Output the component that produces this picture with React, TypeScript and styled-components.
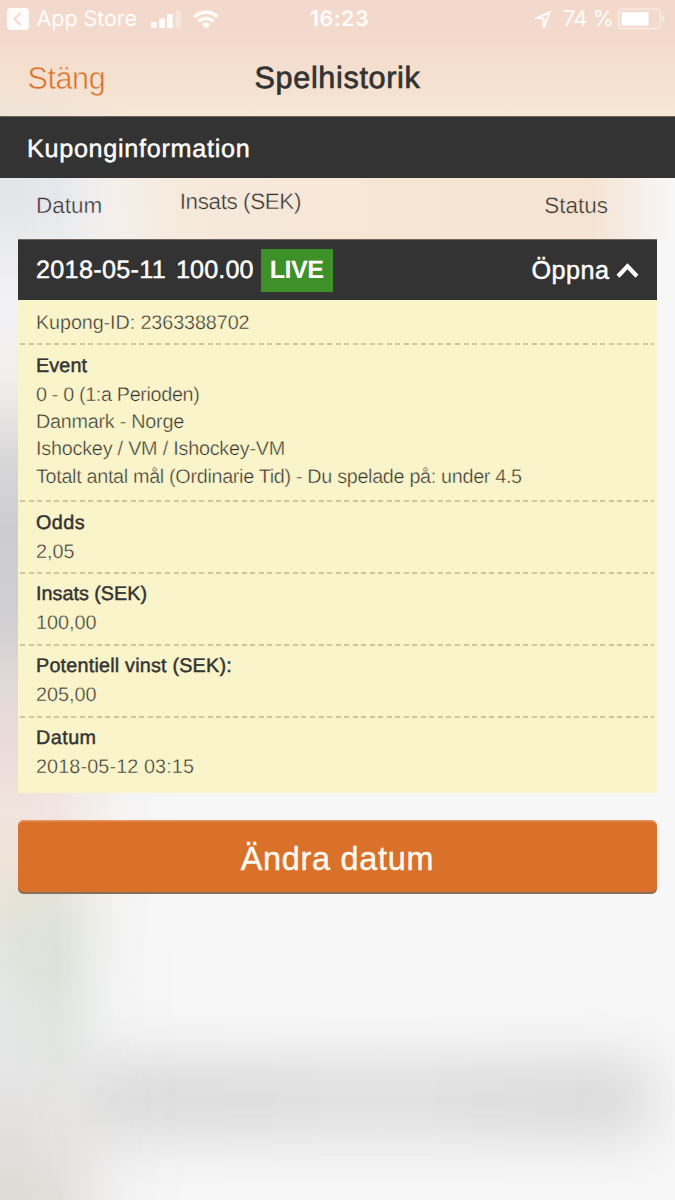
import React from "react";
import styled, { createGlobalStyle, css } from "styled-components";

const paper = "#faf4ca";
const ink = "#333333";

const GlobalStyle = createGlobalStyle`
  * { box-sizing: border-box; }
  html, body { margin: 0; padding: 0; background: #f7f7f8; }
  body {
    font-family: "Liberation Sans", Arial, sans-serif;
    color: ${ink};
    text-rendering: geometricPrecision;
    -webkit-font-smoothing: antialiased;
  }
`;

type Tracking = { $track?: number };
const tracked = css<Tracking>`
  letter-spacing: ${(p) => p.$track ?? 0}px;
  white-space: nowrap;
`;
/* Liberation Sans has no light or medium cut: a stroke thins or thickens it. */
const light = (around: string) => css`-webkit-text-stroke: 0.4px ${around};`;
const medium = css`-webkit-text-stroke: 0.45px currentColor;`;

const Screen = styled.main`
  position: relative;
  isolation: isolate;
  width: 675px;
  height: 1200px;
  overflow: hidden;
  display: flex;
  flex-direction: column;
  background: #f7f7f8;
  &::before {
    content: "";
    position: absolute;
    z-index: -1;
    inset: 0 auto 0 0;
    width: 190px;
    background:
      radial-gradient(ellipse 65px 150px at 62px 965px, rgba(212,218,206,.7), rgba(212,218,206,.3) 55%, transparent),
      linear-gradient(#e4e5e9 200px, #f2f2f5 300px, #f2eeec 380px, #d8d7d8 460px, #cdcdd0 530px,
        #cfced0 610px, #e2d9d9 690px, #ecdcd9 750px, #f1e3de 810px, #efe3d8 860px, #e5e4d9 910px,
        #e3e6e1 960px, #e6e8e8 1010px, #e5e5e6 1070px, #e3e1df 1120px, #dedad6 1200px);
    mask-image: linear-gradient(90deg, #000 20px, rgba(0,0,0,.85) 60px, rgba(0,0,0,.5) 90px, rgba(0,0,0,.2) 118px, rgba(0,0,0,.06) 145px, transparent);
  }
  &::after {
    content: "";
    position: absolute;
    z-index: -2;
    top: 1060px;
    left: 60px;
    width: 590px;
    height: 78px;
    background: linear-gradient(90deg, #dadada 25%, #dedede 55%, #d8d8d8 90%);
    filter: blur(28px);
  }
`;

const Header = styled.header`
  height: 116px;
  background:
    radial-gradient(ellipse 130px 36px at 0 120px, rgba(234,226,220,.8), transparent),
    linear-gradient(#f3d8cc, #f4dacd 40px, #f5e0cf 75px, #f6e7d6 116px);
`;

const StatusBar = styled.div`
  display: grid;
  grid-template-columns: 1fr auto 1fr;
  align-items: center;
  height: 38px;
  padding: 0 10px 0 7px;
  color: #fffdfb;
  font: 400 21.5px/38px Inter, sans-serif;
`;
const StatusGroup = styled.div<{ $end?: boolean }>`
  display: flex;
  align-items: center;
  justify-content: ${(p) => (p.$end ? "flex-end" : "flex-start")};
`;
const StatusText = styled.span<Tracking & { $left?: number }>`
  margin-left: ${(p) => p.$left ?? 0}px;
  ${tracked}
`;
const Clock = styled(StatusText)`
  padding-left: 7px;
  font-weight: 600;
`;
const Glyph = styled.svg<{ $left?: number }>`
  display: block;
  flex: none;
  margin-left: ${(p) => p.$left ?? 0}px;
`;

const NavBar = styled.nav`
  display: grid;
  grid-template-columns: 1fr auto 1fr;
  align-items: center;
  height: 80px;
  padding: 0 27.5px;
`;
const CloseButton = styled.button<Tracking>`
  justify-self: start;
  padding: 0;
  border: 0;
  background: none;
  color: #d9712b;
  font: 400 30.6px/40px "Liberation Sans", sans-serif;
  ${tracked}
  -webkit-text-stroke: 0.6px #f4dece;
`;
const Title = styled.h1<Tracking>`
  margin: 0;
  font: 400 30.6px/40px "Liberation Sans", sans-serif;
  ${tracked}
  -webkit-text-stroke: 0.7px currentColor;
`;

const SectionBar = styled.h2<Tracking>`
  height: 62px;
  margin: 0;
  padding: 2px 27px 0;
  border-top: 1px solid #6d655f;
  background: #333;
  color: #fff;
  font: 400 25.2px/60px "Liberation Sans", sans-serif;
  ${tracked}
  ${medium}
`;

const ColumnHeads = styled.div`
  display: flex;
  align-items: flex-start;
  height: 61px;
  padding: 0 67px 0 36px;
  background:
    linear-gradient(90deg, transparent 70px, rgba(246,233,220,.95) 175px, #f6e6d4 400px, #f5e4d2 590px,
      rgba(246,234,224,.8) 630px, transparent 672px);
`;
const ColumnHead = styled.span<Tracking & { $top: number; $around: string }>`
  padding-top: ${(p) => p.$top}px;
  font-size: 22.5px;
  line-height: 28px;
  ${tracked}
  ${(p) => light(p.$around)}
  &:nth-child(2) { margin-left: 77.5px; }
  &:last-child { margin-left: auto; }
`;

const Coupon = styled.section`
  margin: 0 18px;
`;
const CouponBar = styled.div`
  display: flex;
  align-items: center;
  height: 61px;
  padding: 1px 18px 0 18px;
  border-top: 1px solid #6d655f;
  background: #333;
  color: #fff;
  font-size: 25.2px;
`;
const BarText = styled.span<Tracking & { $left?: number }>`
  margin-left: ${(p) => p.$left ?? 0}px;
  ${tracked}
  ${medium}
`;
const LiveBadge = styled.span<Tracking>`
  width: 72px;
  margin-left: 7px;
  background: #3d9128;
  font-weight: 700;
  line-height: 43px;
  text-align: center;
  ${tracked}
`;
const Toggle = styled.button`
  display: flex;
  align-items: center;
  margin-left: auto;
  padding: 0;
  border: 0;
  background: none;
  color: inherit;
  font: inherit;
`;

const Details = styled.div`
  height: 493px;
  background: ${paper};
`;
const Row = styled.div<{ $height: number; $top: number }>`
  height: ${(p) => p.$height}px;
  padding: ${(p) => p.$top}px 18px 0;
  font-size: 19.8px;
  line-height: 27.3px;
  background: repeating-linear-gradient(90deg, #cdc8a4 0 5px, transparent 5px 8.53px) 2px 100% / 634px 2px no-repeat;
  &:last-child { background: none; }
`;
const RowTitle = styled.h3<Tracking>`
  margin: 0 0 1.6px;
  font: inherit;
  ${tracked}
  ${medium}
`;
const Line = styled.p<Tracking>`
  margin: 0;
  ${tracked}
  ${light(paper)}
`;

const ChangeDate = styled.button<Tracking>`
  height: 74px;
  margin: 27px 18px 0;
  padding: 4px 0 0;
  border: 0;
  border-radius: 6px;
  background: #d9712b;
  box-shadow: inset 0 1.5px 0 #e6975f, inset 0 -2px 0 #8b6d58;
  color: #fffaf0;
  font: 400 32.4px/70px "Liberation Sans", sans-serif;
  ${tracked}
  ${medium}
`;

const fields = [
  { title: "Odds", track: 0.45, value: "2,05", top: 8.2 },
  { title: "Insats (SEK)", track: 0, value: "100,00", top: 7.4 },
  { title: "Potentiell vinst (SEK):", track: 0.2, value: "205,00", top: 7.2 },
  { title: "Datum", track: 0.45, value: "2018-05-12 03:15", valueTrack: 0.12, top: 7.2 },
];

export default function App() {
  return (
    <>
      <GlobalStyle />
      <Screen>
        <Header>
          <StatusBar>
            <StatusGroup>
              <Glyph width="22" height="22" viewBox="0 0 22 22">
                <rect width="22" height="22" rx="4" fill="#fffdfb" />
                <path d="M13.5 5 7.5 11l6 6" fill="none" stroke="#f3d8cc" strokeWidth="1.9" />
              </Glyph>
              <StatusText $left={7.5} $track={-0.05}>App Store</StatusText>
              <Glyph $left={13.5} width="31" height="18" viewBox="0 0 31 18" fill="#fffdfb">
                <rect x="0" y="12" width="5.6" height="6" rx="1.2" />
                <rect x="8.2" y="8.5" width="5.8" height="9.5" rx="1.2" />
                <rect x="16" y="4" width="5.8" height="14" rx="1.2" />
                <rect x="24.5" y="0" width="5.6" height="18" rx="1.2" opacity=".35" />
              </Glyph>
              <Glyph $left={11.5} width="26" height="19" viewBox="0 0 26 19" fill="none" stroke="#fffdfb" strokeWidth="3.4">
                <path d="M1.4 7.1a16.4 16.4 0 0 1 23.2 0" />
                <path d="M5.6 11.5a10.4 10.4 0 0 1 14.8 0" />
                <path d="M13 18.4 8.9 14.3a5.8 5.8 0 0 1 8.2 0z" fill="#fffdfb" stroke="none" />
              </Glyph>
            </StatusGroup>
            <Clock $track={0.45}>16:23</Clock>
            <StatusGroup $end>
              <Glyph width="19" height="18" viewBox="0 0 19 18" fill="#fffdfb" fillRule="evenodd">
                <path d="M0 8.6 18.4.4 11.8 18 9.6 17.8V9.2zM11.6 7.4 11.8 12.6 14.8 4.4 7.6 7.4z" />
              </Glyph>
              <StatusText $left={11} $track={-0.35}>74&nbsp;%</StatusText>
              <Glyph $left={4.5} width="47" height="22" viewBox="0 0 47 22">
                <rect x=".8" y="1" width="41.4" height="19.6" rx="3" fill="none" stroke="#fffdfb" strokeOpacity=".5" strokeWidth="1.5" />
                <rect x="3.5" y="4" width="27" height="13.6" fill="#fff" />
                <path d="M44 7.2v7q2.6-1 2.6-3.5t-2.6-3.5z" fill="#fffdfb" opacity=".5" />
              </Glyph>
            </StatusGroup>
          </StatusBar>
          <NavBar>
            <CloseButton $track={-0.45}>Stäng</CloseButton>
            <Title $track={0.65}>Spelhistorik</Title>
          </NavBar>
        </Header>
        <SectionBar $track={0.7}>Kuponginformation</SectionBar>
        <ColumnHeads>
          <ColumnHead $top={14} $around="#ececee">Datum</ColumnHead>
          <ColumnHead $top={9.5} $track={-0.42} $around="#f6e7d7">Insats (SEK)</ColumnHead>
          <ColumnHead $top={14} $around="#f5e5d4">Status</ColumnHead>
        </ColumnHeads>
        <Coupon>
          <CouponBar>
            <BarText $track={0.3}>2018-05-11</BarText>
            <BarText $left={10} $track={0.1}>100.00</BarText>
            <LiveBadge $track={-0.6}>LIVE</LiveBadge>
            <Toggle>
              <BarText $track={0.5}>Öppna</BarText>
              <Glyph $left={6.5} width="23" height="17" viewBox="0 0 23 17">
                <path d="M2 14.2 11.5 4.2 21 14.2" fill="none" stroke="#fff" strokeWidth="4.2" />
              </Glyph>
            </Toggle>
          </CouponBar>
          <Details>
            <Row $height={45} $top={10}>
              <Line $track={-0.1}>Kupong-ID: 2363388702</Line>
            </Row>
            <Row $height={157} $top={8}>
              <RowTitle $track={0.1}>Event</RowTitle>
              <Line $track={-0.35}>0 - 0 (1:a Perioden)</Line>
              <Line $track={-0.25}>Danmark - Norge</Line>
              <Line $track={-0.22}>Ishockey / VM / Ishockey-VM</Line>
              <Line $track={-0.32}>Totalt antal mål (Ordinarie Tid) - Du spelade på: under 4.5</Line>
            </Row>
            {fields.map((f) => (
              <Row key={f.title} $height={72} $top={f.top}>
                <RowTitle $track={f.track}>{f.title}</RowTitle>
                <Line $track={f.valueTrack}>{f.value}</Line>
              </Row>
            ))}
          </Details>
        </Coupon>
        <ChangeDate $track={0.75}>Ändra datum</ChangeDate>
      </Screen>
    </>
  );
}
